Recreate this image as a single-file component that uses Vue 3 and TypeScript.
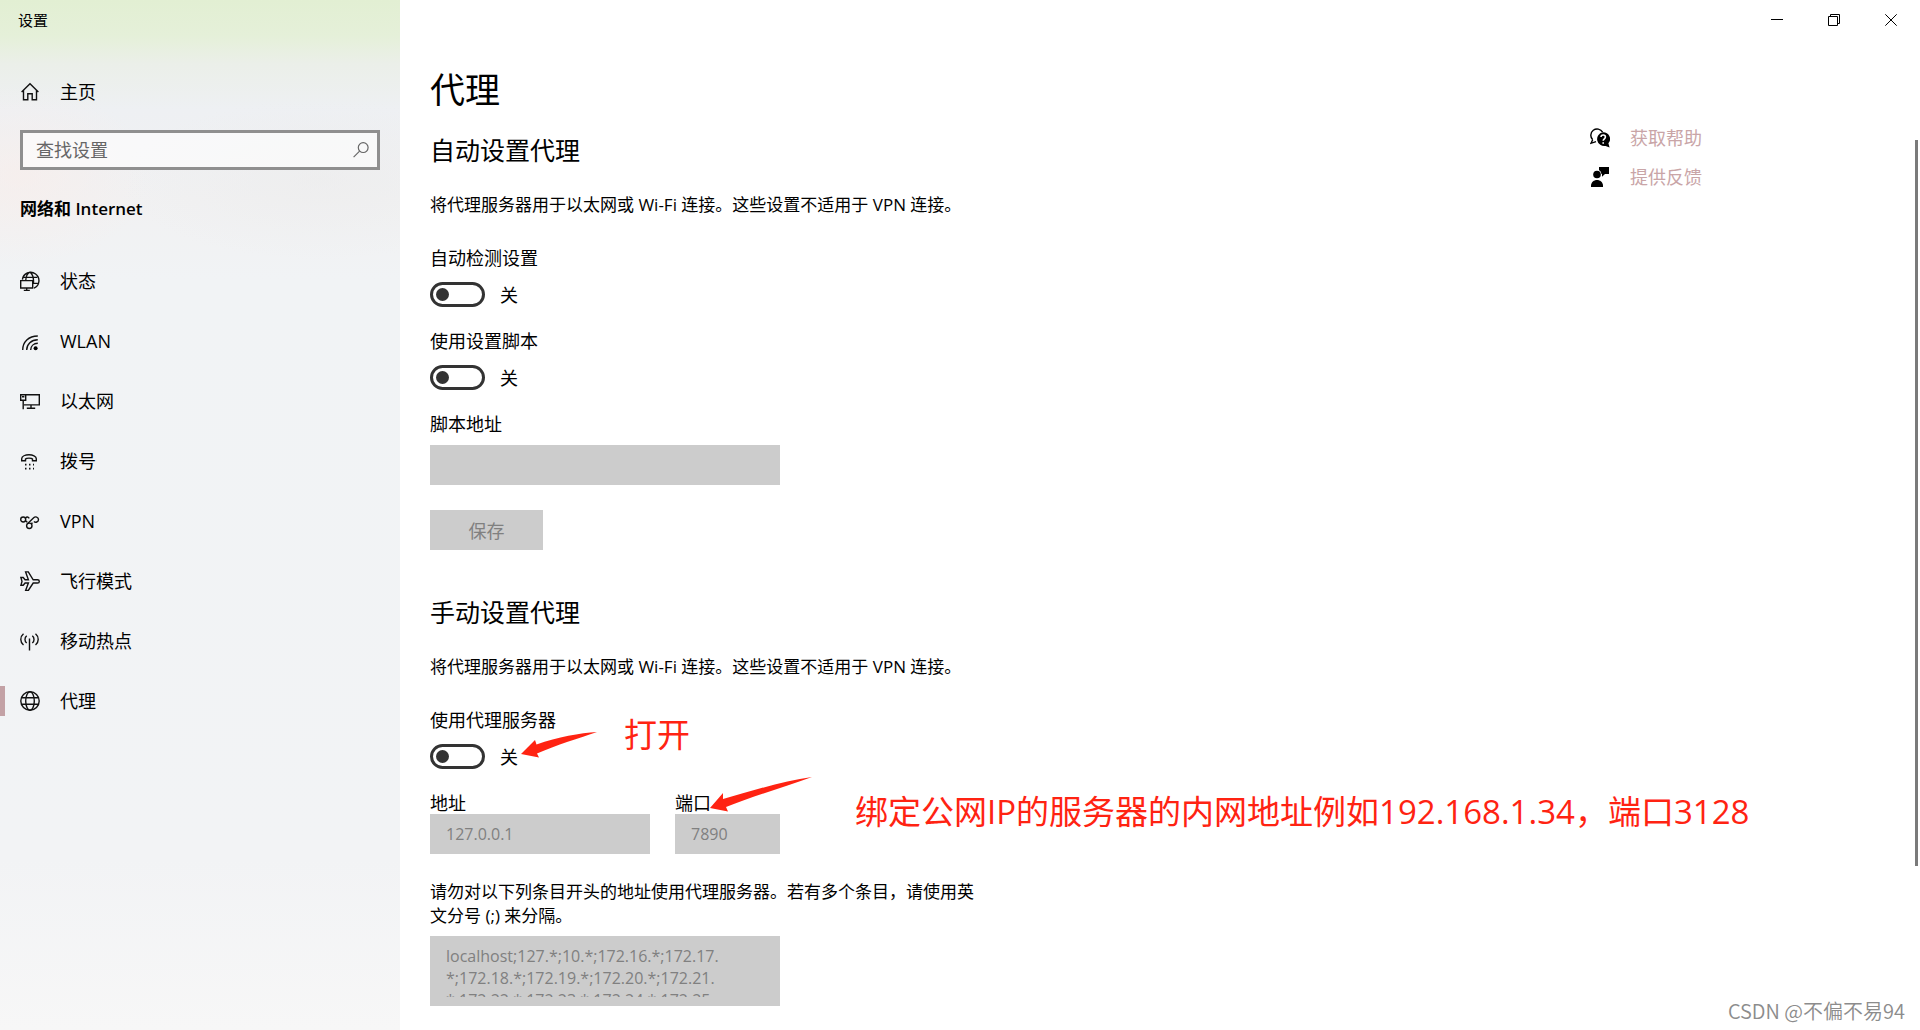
<script setup lang="ts">
import { ref } from 'vue'

interface NavItem {
  id: string
  label: string
}

const navItems: NavItem[] = [
  { id: 'status', label: '状态' },
  { id: 'wlan', label: 'WLAN' },
  { id: 'ethernet', label: '以太网' },
  { id: 'dialup', label: '拨号' },
  { id: 'vpn', label: 'VPN' },
  { id: 'airplane', label: '飞行模式' },
  { id: 'hotspot', label: '移动热点' },
  { id: 'proxy', label: '代理' },
]

const active = ref('proxy')
const query = ref('')
const autoDetect = ref(false)
const useScript = ref(false)
const useProxy = ref(false)
const scriptUrl = ref('')
const address = ref('127.0.0.1')
const port = ref('7890')
const exceptions = ref(
  [
    'localhost;127.*;10.*;172.16.*;172.17.',
    '*;172.18.*;172.19.*;172.20.*;172.21.',
    '*;172.22.*;172.23.*;172.24.*;172.25.',
  ].join('\n'),
)
</script>

<template>
  <div class="window">
    <aside class="sidebar">
      <div class="app-name">设置</div>
      <a class="home" href="#home">
        <svg class="icon" viewBox="0 0 20 20" aria-hidden="true">
          <path d="M1.600 9.900 10 1.700l8.400 8.200M3.500 8.500v9.200h4.300v-6h4.400v6h4.300V8.500" />
        </svg>
        <span>主页</span>
      </a>
      <div class="search">
        <input v-model="query" type="text" placeholder="查找设置" aria-label="查找设置" />
        <svg class="search-icon" viewBox="0 0 16 16" aria-hidden="true">
          <circle cx="10.2" cy="5.6" r="4.9" />
          <path d="M6.6 9.2.6 15.2" />
        </svg>
      </div>
      <h2 class="group">网络和 Internet</h2>
      <nav class="nav">
        <a
          v-for="item in navItems"
          :key="item.id"
          :href="'#' + item.id"
          class="nav-item"
          :class="{ active: active === item.id }"
          @click.prevent="active = item.id"
        >
          <svg class="icon" viewBox="0 0 20 20" aria-hidden="true">
            <template v-if="item.id === 'status'">
              <path d="M2.400 8.600A8.300 8.300 0 1 1 14 17.200M9.600 1C7 3 6 5.500 5.800 9M10 1c2.800 2.500 4 7 3.300 12M3.200 6.400h14M13.300 12.400h4.400" />
              <path d="M.7 9.600h12v7.400h-12zM6.700 17v2.400M3.800 19.400h6" />
            </template>
            <template v-else-if="item.id === 'wlan'">
              <path d="M2.700 19C2.700 11 8.500 5 17.800 5M6.700 19c0-6 4.600-10.200 11.100-10.200M10.700 19c0-4 3-6.700 7.100-6.700" />
              <circle class="solid" cx="15.600" cy="17.300" r="2" />
            </template>
            <template v-else-if="item.id === 'ethernet'">
              <path d="M5.800 3.700h13.500v10.200H4M11 14v3.300M6.800 17.300h8.400M.7 3.700h5v5.500h-5zM3.200 9.200v9M2 5.800h2.400" />
            </template>
            <template v-else-if="item.id === 'dialup'">
              <path d="M1.700 9.700V7.800C1.700 2.400 16.300 2.400 16.300 7.800v1.900h-3.800V8c-1-1.200-6-1.200-7 0v1.700z" />
              <path class="dots" d="M5 13.600h9M5 17.600h9" />
            </template>
            <template v-else-if="item.id === 'vpn'">
              <circle cx="3.200" cy="8.500" r="2.500" />
              <circle cx="9.300" cy="14.800" r="2.700" />
              <path d="M5.500 7.200C6.700 5.500 8 5.700 9.300 7.400M7.200 13l6.500-6.300c1.600-1.500 4.800-.8 4.800 1.800s-3 3.400-4.600 1.900M5.500 9.700l1.800 1.600M11.400 13l1-1.400" />
            </template>
            <template v-else-if="item.id === 'airplane'">
              <path d="M.9 6.500h2.300l1.900 2.300h3.300L5.600.9h2.700l4.900 7.900h4.300c2.400 0 2.400 3.200 0 3.200h-4.300l-4.900 7.500H5.600L8.400 12H5.100l-1.900 2.300H.9L2 10.400z" />
            </template>
            <template v-else-if="item.id === 'hotspot'">
              <path d="M9.500 7.500v12M3.500 2.800c-3.600 3-3.600 8.200 0 11.200M6.700 4.800c-2.300 1.900-2.300 5.300 0 7.200M15.500 2.800c3.600 3 3.600 8.200 0 11.200M12.300 4.800c2.300 1.900 2.300 5.300 0 7.200" />
            </template>
            <template v-else>
              <circle cx="10" cy="10" r="9.200" />
              <ellipse cx="10" cy="10" rx="4.300" ry="9.200" />
              <path d="M1.600 6.800h16.800M1.600 13.200h16.800" />
            </template>
          </svg>
          <span>{{ item.label }}</span>
        </a>
      </nav>
    </aside>

    <main class="main">
      <header class="titlebar">
        <button type="button" class="caption" aria-label="最小化">
          <svg viewBox="0 0 12 12" aria-hidden="true"><path d="M0 5.500h12" /></svg>
        </button>
        <button type="button" class="caption" aria-label="还原">
          <svg viewBox="0 0 12 12" aria-hidden="true">
            <path d="M.5 2.500h9v9h-9zM2.500 2.500v-2h9v9h-2" />
          </svg>
        </button>
        <button type="button" class="caption" aria-label="关闭">
          <svg viewBox="0 0 12 12" aria-hidden="true"><path d="m.3.3 11.400 11.400M11.700.3.3 11.700" /></svg>
        </button>
      </header>

      <div class="body">
        <div class="content">
          <h1>代理</h1>

          <section>
            <h2>自动设置代理</h2>
            <p class="desc">将代理服务器用于以太网或 Wi-Fi 连接。这些设置不适用于 VPN 连接。</p>

            <label class="label" for="auto-detect">自动检测设置</label>
            <div class="toggle-row">
              <input id="auto-detect" v-model="autoDetect" class="toggle" type="checkbox" />
              <span class="state">{{ autoDetect ? '开' : '关' }}</span>
            </div>

            <label class="label next" for="use-script">使用设置脚本</label>
            <div class="toggle-row">
              <input id="use-script" v-model="useScript" class="toggle" type="checkbox" />
              <span class="state">{{ useScript ? '开' : '关' }}</span>
            </div>

            <label class="label next" for="script-url">脚本地址</label>
            <input id="script-url" v-model="scriptUrl" class="field wide" type="text" :disabled="!useScript" />
            <button type="button" class="save" :disabled="!useScript">保存</button>
          </section>

          <section class="manual">
            <h2>手动设置代理</h2>
            <p class="desc">将代理服务器用于以太网或 Wi-Fi 连接。这些设置不适用于 VPN 连接。</p>

            <label class="label" for="use-proxy">使用代理服务器</label>
            <div class="toggle-row">
              <input id="use-proxy" v-model="useProxy" class="toggle" type="checkbox" />
              <span class="state">{{ useProxy ? '开' : '关' }}</span>
              <svg class="arrow arrow-toggle" viewBox="0 0 78 26" aria-hidden="true">
                <path d="M1 22 15 8l1.500 4.500C38 5 60 1 77 0 60 6 36 13 17 21.500l2 4z" />
              </svg>
              <strong class="note note-toggle">打开</strong>
            </div>

            <div class="endpoint">
              <div class="address">
                <label for="address">地址</label>
                <input id="address" v-model="address" class="field" type="text" :disabled="!useProxy" />
              </div>
              <div class="port">
                <label for="port">端口</label>
                <input id="port" v-model="port" class="field" type="text" :disabled="!useProxy" />
                <svg class="arrow arrow-port" viewBox="0 0 104 36" aria-hidden="true">
                  <path d="M1 31 14 16v6C45 13 75 4 103 0 76 10 44 19 17 30l2 4.500z" />
                </svg>
                <strong class="note note-port">绑定公网IP的服务器的内网地址例如192.168.1.34，端口3128</strong>
              </div>
            </div>

            <label class="hint" for="exceptions">请勿对以下列条目开头的地址使用代理服务器。若有多个条目，请使用英文分号 (;) 来分隔。</label>
            <textarea id="exceptions" v-model="exceptions" class="exceptions" :disabled="!useProxy"></textarea>
          </section>
        </div>

        <div class="links">
          <a href="#help">
            <svg viewBox="0 0 20 20" aria-hidden="true">
              <path class="outline" d="M2.700 11.800A6.300 6.300 0 1 1 12.600 4.200M2.700 11.800 1 15.300l5-1.600" />
              <path d="M12.800 4.200a7 6.700 0 0 1 5.600 11l1.200 4.300-4-1.600A7 6.900 0 1 1 12.800 4.200z" />
              <path class="mark" d="M11 9c0-2.800 4.400-2.600 4.400 0 0 1.800-2.200 1.800-2.200 3.800M13.200 14.300v1.500" />
            </svg>
            <span>获取帮助</span>
          </a>
          <a href="#feedback">
            <svg viewBox="0 0 20 20" aria-hidden="true">
              <path d="M9 0h10v7h-4l-3 2.800V7h-.6C11 4.600 10.400 3.800 9 3.200z" />
              <circle cx="7" cy="7.500" r="3.800" />
              <path d="M1 20v-1c0-8 12-8 12 0v1z" />
            </svg>
            <span>提供反馈</span>
          </a>
        </div>
      </div>

      <div class="scrollbar"></div>
      <div class="watermark">CSDN @不偏不易94</div>
    </main>
  </div>
</template>

<style>
body {
  margin: 0;
  background: #fff;
}
</style>

<style scoped>
* {
  box-sizing: border-box;
}

.window {
  display: flex;
  min-height: 100vh;
  color: #000;
  font-family: 'Open Sans', 'Noto Sans CJK SC', sans-serif;
  font-size: 18px;
  line-height: 24px;
}

h1,
h2,
p {
  margin: 0;
  font-weight: 400;
}

a {
  color: inherit;
  text-decoration: none;
}

svg {
  flex: none;
  fill: none;
}

/* sidebar */
.sidebar {
  flex: none;
  width: 400px;
  background:
    radial-gradient(ellipse 130px 90px at 20px 175px, rgba(248, 238, 235, 0.7), transparent),
    radial-gradient(ellipse 200px 80px at 320px 180px, rgba(236, 236, 236, 0.6), transparent),
    linear-gradient(#e2efd3 0, #e5f0d9 36px, #ebefe9 64px, #eef0f3 110px, #f1f1f2 200px, #f1f3f5 280px, #f2f3f5 860px, #f7f7f7 100%);
}

.app-name {
  height: 40px;
  padding-left: 18px;
  font-size: 15px;
  line-height: 40px;
}

.home,
.nav-item {
  display: flex;
  align-items: center;
  gap: 20px;
  height: 60px;
  padding-left: 20px;
}

.home {
  margin-top: 22px;
}

.icon {
  width: 20px;
  height: 20px;
  stroke: #111;
  stroke-width: 1.4;
}

.icon .solid {
  fill: #000;
  stroke: none;
}

.icon .dots {
  stroke-width: 1.6;
  stroke-dasharray: 1.5 2.5;
}

.search {
  display: flex;
  align-items: center;
  height: 40px;
  margin: 8px 20px 0;
  padding-right: 8px;
  border: 3px solid #8f8f8f;
  background: rgba(255, 255, 255, 0.6);
}

.search input {
  flex: 1;
  min-width: 0;
  height: 34px;
  padding: 0 13px;
  border: 0;
  outline: 0;
  background: none;
  color: #000;
  font: inherit;
}

.search input::placeholder {
  color: #666;
  opacity: 1;
}

.search-icon {
  width: 16px;
  height: 16px;
  stroke: #666;
  stroke-width: 1.2;
}

.group {
  margin: 27px 20px 0;
  font-size: 17px;
  font-weight: 600;
}

.nav {
  margin-top: 30px;
}

.nav-item.active {
  background: linear-gradient(#c3a1a5, #c3a1a5) left center / 5px 30px no-repeat;
}

/* main area */
.main {
  position: relative;
  flex: 1;
  min-width: 0;
}

.titlebar {
  display: flex;
  justify-content: flex-end;
  height: 40px;
  padding-right: 1px;
}

.caption {
  display: flex;
  align-items: center;
  justify-content: center;
  width: 57px;
  height: 40px;
  padding: 0;
  border: 0;
  background: none;
}

.caption svg {
  width: 12px;
  height: 12px;
  stroke: #000;
}

.body {
  display: flex;
}

.content {
  flex: 1;
  min-width: 0;
  padding: 26px 0 24px 30px;
}

h1 {
  font-size: 35px;
  line-height: 48px;
}

.content h2 {
  margin-top: 19px;
  font-size: 25px;
  line-height: 34px;
}

.content .manual h2 {
  margin-top: 45px;
}

.desc {
  margin-top: 26px;
  font-size: 17px;
}

.label {
  display: block;
  margin-top: 29px;
}

.label.next {
  margin-top: 22px;
}

.toggle-row {
  position: relative;
  display: flex;
  align-items: center;
  gap: 15px;
  height: 25px;
  margin-top: 12px;
}

.state {
  padding-top: 1px;
}

.toggle {
  display: flex;
  align-items: center;
  width: 55px;
  height: 25px;
  margin: 0;
  padding: 0 3px;
  border: 3px solid #333;
  border-radius: 13px;
  appearance: none;
  background: #fff;
}

.toggle::before {
  width: 13px;
  height: 13px;
  border-radius: 50%;
  background: #333;
  content: '';
}

.toggle:checked {
  justify-content: flex-end;
}

.field {
  display: block;
  width: 100%;
  height: 40px;
  padding: 0 16px;
  border: 0;
  border-radius: 0;
  background: #ccc;
  color: #808080;
  font: inherit;
  font-size: 16px;
}

.field.wide {
  width: 350px;
  margin-top: 9px;
}

.save {
  display: block;
  width: 113px;
  height: 40px;
  margin-top: 25px;
  padding: 2px 0 0;
  border: 0;
  background: #ccc;
  color: #808080;
  font: inherit;
}

.endpoint {
  display: flex;
  gap: 25px;
  margin-top: 23px;
}

.endpoint label {
  display: block;
  line-height: 22px;
}

.address {
  width: 220px;
}

.port {
  position: relative;
  width: 105px;
}

.hint {
  display: block;
  width: 560px;
  margin-top: 26px;
  font-size: 17px;
}

.exceptions {
  display: block;
  width: 350px;
  height: 70px;
  margin-top: 8px;
  padding: 0 8px;
  overflow: hidden;
  border: solid #ccc;
  border-width: 9px 8px;
  background: #ccc;
  color: #808080;
  font: inherit;
  font-size: 16px;
  line-height: 22px;
  resize: none;
}

/* red annotations laid over the form */
.arrow {
  position: absolute;
  fill: #ff2312;
}

.note {
  position: absolute;
  color: #ff2312;
  font-size: 33px;
  font-weight: 400;
  line-height: 40px;
  white-space: nowrap;
}

.arrow-toggle {
  top: -12px;
  left: 90px;
  width: 78px;
  height: 26px;
}

.note-toggle {
  top: -29px;
  left: 194px;
}

.arrow-port {
  top: -15px;
  left: 34px;
  width: 104px;
  height: 36px;
}

.note-port {
  top: 0;
  left: 180px;
}

/* help links */
.links {
  display: flex;
  flex: none;
  flex-direction: column;
  gap: 15px;
  width: 330px;
  padding-top: 86px;
}

.links a {
  display: flex;
  align-items: center;
  gap: 20px;
  height: 24px;
  color: #c9a5a7;
}

.links svg {
  width: 20px;
  height: 20px;
  fill: #000;
}

.links .outline {
  fill: none;
  stroke: #000;
  stroke-width: 1.4;
}

.links .mark {
  fill: none;
  stroke: #fff;
  stroke-width: 1.6;
}

.scrollbar {
  position: absolute;
  top: 140px;
  right: 2px;
  width: 3px;
  height: 726px;
  background: #7a7a7a;
}

.watermark {
  position: absolute;
  right: 15px;
  bottom: 4px;
  color: #8c8c8c;
  font-family: 'Noto Sans CJK SC', sans-serif;
  font-size: 20px;
  font-weight: 350;
  line-height: 30px;
}
</style>
